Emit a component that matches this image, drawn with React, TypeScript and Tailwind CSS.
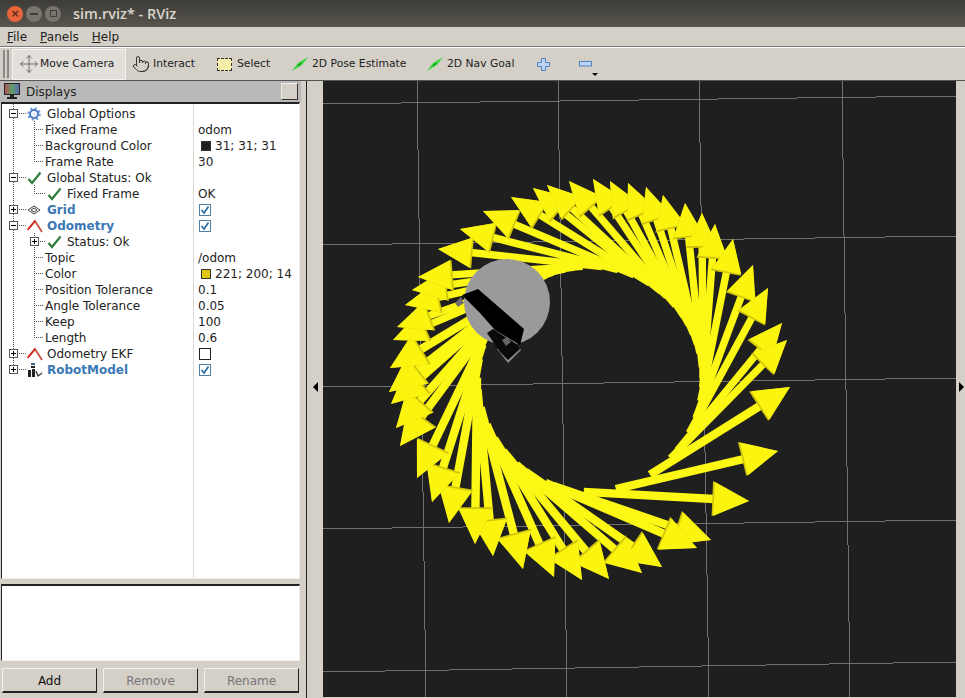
import { Move, Pointer } from "lucide-react";
import type { ReactNode } from "react";

const font = { fontFamily: '"DejaVu Sans", sans-serif' };

// arrow tips, read off the screenshot, in path order
const tips: [number, number][] = [
  [790, 387], [778, 451], [749, 501], [711, 540], [697, 548], [662, 567], [642, 573], [609, 579], [582, 580],
  [554, 577], [523, 569], [493, 556], [475, 544], [449, 523], [432, 502], [417, 478], [400, 446], [396, 428],
  [391, 404], [389, 392], [390, 368], [393, 340], [397, 327], [405, 305], [412, 290], [418, 277], [438, 249],
  [460, 229], [483, 211], [511, 197], [533, 188], [547, 185], [569, 181], [593, 179], [610, 181], [628, 183],
  [646, 187], [663, 195], [685, 203], [702, 213], [715, 224], [733, 239], [753, 265], [768, 288], [782, 323], [787, 340],
];

const pts = (list: number[][]) => list.map((p) => p.join(",")).join(" ");

function arrowGeometry(tip: [number, number]) {
  const cx = 590;
  const cy = 379;
  const r = 113;
  const dx = tip[0] - cx;
  const dy = tip[1] - cy;
  const a = Math.atan2(dy, dx) + Math.acos(r / Math.hypot(dx, dy));
  const sx = cx + r * Math.cos(a);
  const sy = cy + r * Math.sin(a);
  const len = Math.hypot(tip[0] - sx, tip[1] - sy);
  const ux = (tip[0] - sx) / len;
  const uy = (tip[1] - sy) / len;
  const nx = -uy;
  const ny = ux;
  // the far side of the circle is foreshortened by the camera
  const far = tip[1] < 350;
  const tw = far ? 3.7 : 4.2;
  const hw = far ? 15 : 17;
  const hl = far ? 33 : 35;
  const bx = tip[0] - ux * hl;
  const by = tip[1] - uy * hl;
  return {
    tail: [
      [sx + nx * tw, sy + ny * tw],
      [bx + nx * tw, by + ny * tw],
      [bx - nx * tw, by - ny * tw],
      [sx - nx * tw, sy - ny * tw],
    ],
    head: [tip, [bx + nx * hw, by + ny * hw], [bx - nx * hw, by - ny * hw]],
    shade: [tip, [bx + nx * hw - ux * 1.5, by + ny * hw - uy * 1.5], [bx - nx * (hw + 1) - ux * 2, by - ny * (hw + 1) - uy * 2]],
  };
}

function GridLine({ d }: { d: number[] }) {
  return <line x1={d[0]} y1={d[1]} x2={d[2]} y2={d[3]} stroke="#707070" strokeWidth="1" shapeRendering="crispEdges" />;
}

function Scene() {
  const arrows = tips.map(arrowGeometry);
  return (
    <svg viewBox="323 81 633 616" className="block w-full h-full">
      <rect x="323" y="81" width="633" height="616" fill="#1f1f1f" />
      <GridLine d={[417, 81, 426, 697]} />
      <GridLine d={[558, 81, 567, 697]} />
      <GridLine d={[699, 81, 709, 697]} />
      <GridLine d={[842, 81, 850, 697]} />
      <GridLine d={[323, 104, 956, 96]} />
      <GridLine d={[323, 245, 956, 236]} />
      <GridLine d={[323, 387, 956, 378]} />
      <GridLine d={[323, 529, 956, 520]} />
      <GridLine d={[323, 672, 956, 662]} />
      {arrows.map((g, i) => (
        <polygon key={i} points={pts(g.tail)} fill="#fcf714" />
      ))}
      {arrows.map((g, i) => (
        <g key={i}>
          <polygon points={pts(g.shade)} fill="#d2c60c" />
          <polygon points={pts(g.head)} fill="#fbf40f" />
        </g>
      ))}
      <circle cx="507" cy="302" r="43" fill="#9a9a9a" />
      <polygon points="455,303 461,297 464,303 458,307" fill="#707070" />
      <polygon points="462,295 478,289 524,329 520,345 495,330 480,313" fill="#000" />
      <polygon points="497,349 508,363 521,350 517,344" fill="#8a8a8a" />
      <polygon points="487,333 493,329 518,345 520,349 508,360 500,352" fill="#0a0a0a" />
      <polygon points="502,340 507,337 511,342 506,346" fill="#666" />
    </svg>
  );
}

function ExpandBox({ open }: { open: boolean }) {
  return (
    <svg width="9" height="9" viewBox="0 0 9 9" className="block">
      <rect x="0.5" y="0.5" width="8" height="8" fill="#fff" stroke="#555" />
      <line x1="2" y1="4.5" x2="7" y2="4.5" stroke="#000" />
      {!open && <line x1="4.5" y1="2" x2="4.5" y2="7" stroke="#000" />}
    </svg>
  );
}

function CheckMark() {
  return (
    <svg width="15" height="14" viewBox="0 0 15 14" className="block">
      <polyline points="1.5,8 5,12 13.5,1.5" fill="none" stroke="#2f7d3b" strokeWidth="2.2" />
    </svg>
  );
}

function Gear() {
  return (
    <svg width="14" height="14" viewBox="0 0 14 14" className="block">
      <circle cx="7" cy="7" r="5.6" fill="none" stroke="#6f9bd8" strokeWidth="2.4" strokeDasharray="2 2.4" />
      <circle cx="7" cy="7" r="4" fill="none" stroke="#4c7cc4" strokeWidth="2" />
      <circle cx="7" cy="7" r="1.8" fill="#dfe9f7" />
    </svg>
  );
}

function GridIcon() {
  return (
    <svg width="14" height="10" viewBox="0 0 14 10" className="block">
      <path d="M1 5 L7 1 L13 5 L7 9 Z M4 5 L7 3 L10 5 L7 7 Z" fill="none" stroke="#444" />
    </svg>
  );
}

function OdomIcon() {
  return (
    <svg width="16" height="14" viewBox="0 0 16 14" className="block">
      <polyline points="0.5,11 8,2 15,13" fill="none" stroke="#c8503f" strokeWidth="1.8" />
      <polyline points="1,10.5 8,2" fill="none" stroke="#d22a1c" strokeWidth="1.8" />
    </svg>
  );
}

function RobotIcon() {
  return (
    <svg width="16" height="15" viewBox="0 0 16 15" className="block">
      <rect x="4" y="0" width="4" height="2" fill="#3f5f8f" />
      <rect x="4" y="3" width="4" height="2" fill="#222" />
      <path d="M1 14 V7 H4 V14 Z M5 14 V6 H8 V14 Z" fill="#222" />
      <path d="M9 8 L11 13 L15 10" fill="none" stroke="#333" strokeWidth="1.3" />
    </svg>
  );
}

function Swatch({ color }: { color: string }) {
  return <span className="w-[10px] h-[10px] mr-[4px] border border-[#333]" style={{ background: color }} />;
}

function CheckBox({ on }: { on: boolean }) {
  return (
    <span className={on ? "ml-[1px] w-[12px] h-[12px] border border-[#4f7f9f] flex items-center justify-center" : "ml-[1px] w-[12px] h-[12px] border border-[#222] bg-white"}>
      {on && (
        <svg width="10" height="10" viewBox="0 0 10 10" className="block">
          <polyline points="1.5,5 4,8 8.5,1.5" fill="none" stroke="#2f6f9f" strokeWidth="1.7" />
        </svg>
      )}
    </span>
  );
}

type RowProps = {
  indent: number;
  box?: "open" | "closed";
  boxX?: number;
  icon?: ReactNode;
  iconX?: number;
  label: string;
  bold?: boolean;
  value?: ReactNode;
};

function Row({ indent, box, boxX = 7, icon, iconX = 25, label, bold, value }: RowProps) {
  return (
    <div className="relative flex h-4 items-center">
      {box && (
        <span className="absolute top-[3px]" style={{ left: boxX }}>
          <ExpandBox open={box === "open"} />
        </span>
      )}
      {icon && (
        <span className="absolute top-0 h-4 flex items-center" style={{ left: iconX }}>
          {icon}
        </span>
      )}
      <span
        className={bold ? "w-[191px] shrink-0 font-bold text-[#3b78b5] whitespace-nowrap" : "w-[191px] shrink-0 text-[#222] whitespace-nowrap"}
        style={{ paddingLeft: indent }}
      >
        {label}
      </span>
      <span className="flex items-center pl-[5px] text-[#222] whitespace-nowrap">{value}</span>
    </div>
  );
}

function TreeGuides() {
  const hs = [
    [12, 113, 25], [33, 129, 43], [33, 145, 43], [33, 161, 43], [12, 177, 25], [33, 193, 45], [12, 209, 25],
    [12, 225, 25], [37, 241, 45], [33, 257, 43], [33, 273, 43], [33, 289, 43], [33, 305, 43], [33, 321, 43],
    [33, 337, 43], [12, 353, 25], [12, 369, 25],
  ];
  const vs = [[12, 104, 369], [33, 121, 161], [33, 185, 193], [33, 233, 337]];
  return (
    <svg className="absolute left-0 top-0 pointer-events-none" width="60" height="280" viewBox="1 104 60 280">
      <g stroke="#555" strokeDasharray="1 1" shapeRendering="crispEdges">
        {vs.map((v) => (
          <line key={v.join("-")} x1={v[0] + 0.5} y1={v[1]} x2={v[0] + 0.5} y2={v[2]} />
        ))}
        {hs.map((h) => (
          <line key={h.join("-")} x1={h[0]} y1={h[1] + 0.5} x2={h[2]} y2={h[1] + 0.5} />
        ))}
      </g>
    </svg>
  );
}

function GreenArrow() {
  return (
    <svg width="16" height="14" viewBox="0 0 16 14" className="block shrink-0">
      <polygon points="0,14 6,6 16,0 10,8" fill="#36d63f" />
      <line x1="6" y1="9" x2="9" y2="6" stroke="#0d5f1a" />
    </svg>
  );
}

function ToolButton({ className, icon, label }: { className: string; icon: ReactNode; label: string }) {
  return (
    <div className={`flex h-full shrink-0 items-center whitespace-nowrap text-[#222] ${className}`}>
      {icon}
      <span>{label}</span>
    </div>
  );
}

function PanelButton({ label, disabled }: { label: string; disabled?: boolean }) {
  return (
    <div
      className={
        disabled
          ? "w-[95px] h-[25px] pt-[1px] flex items-center justify-center text-[12px] text-[#777] border border-t-[#f2f0ec] border-l-[#f2f0ec] border-r-[#222] border-b-[#222] border-b-2"
          : "w-[95px] h-[25px] pt-[1px] flex items-center justify-center text-[12px] text-[#111] border border-t-[#f2f0ec] border-l-[#f2f0ec] border-r-[#222] border-b-[#222] border-b-2"
      }
    >
      {label}
    </div>
  );
}

export default function App() {
  return (
    <div className="w-[965px] h-[698px] overflow-hidden flex flex-col bg-[#d4d0c8] text-[12px] leading-4" style={font}>
      {/* title bar */}
      <div className="h-[27px] shrink-0 flex items-center bg-gradient-to-b from-[#3d3c38] to-[#58554e]">
        <div className="flex items-center pl-[7px] gap-[3px]">
          <span className="w-[16px] h-[16px] rounded-full bg-[#e8643a] flex items-center justify-center text-[11px] leading-none font-bold text-[#5a2a18]">×</span>
          <span className="w-[16px] h-[16px] rounded-full bg-[#77756d] flex items-center justify-center">
            <span className="w-[8px] h-[2px] bg-[#3f3e3a]" />
          </span>
          <span className="w-[16px] h-[16px] rounded-full bg-[#77756d] flex items-center justify-center">
            <span className="w-[7px] h-[7px] border border-[#3f3e3a]" />
          </span>
        </div>
        <span className="ml-[12px] text-[14.5px] font-semibold text-[#d9d5cb]" style={{ fontFamily: '"Open Sans", sans-serif' }}>
          sim.rviz* - RViz
        </span>
      </div>

      {/* menu */}
      <div className="h-[19px] shrink-0 flex items-center pl-[7px] gap-[13px] text-[#222] border-b border-b-[#777] box-content">
        <span><span className="underline">F</span>ile</span>
        <span><span className="underline">P</span>anels</span>
        <span><span className="underline">H</span>elp</span>
      </div>

      {/* toolbar */}
      <div className="h-[34px] shrink-0 flex items-center text-[10.75px] border-t border-t-white border-b border-b-[#555]">
        <div className="flex h-[28px] ml-[3px] mr-[3px] w-[6px] justify-between">
          <span className="w-[2px] border border-[#888] bg-[#eee]" />
          <span className="w-[2px] border border-[#888] bg-[#eee]" />
        </div>
        <div className="w-[114px] h-[31px] shrink-0 flex items-center pl-[6px] gap-[1px] bg-[#e3e0db] border border-[#f4f3f0] text-[#222] whitespace-nowrap">
          <Move size={20} strokeWidth={1} color="#555" />
          <span>Move Camera</span>
        </div>
        <ToolButton className="w-[90px] pl-[6px] gap-[3px]" icon={<Pointer size={18} strokeWidth={1.2} color="#222" />} label="Interact" />
        <ToolButton
          className="w-[75px] pl-[1px] gap-[5px]"
          icon={<span className="w-[15px] h-[13px] bg-[#f6efa9] border border-dashed border-[#333]" />}
          label="Select"
        />
        <ToolButton className="w-[135px] pl-[1px] gap-[4px]" icon={<GreenArrow />} label="2D Pose Estimate" />
        <ToolButton className="w-[111px] pl-[1px] gap-[4px]" icon={<GreenArrow />} label="2D Nav Goal" />
        <svg width="13" height="13" viewBox="0 0 13 13" className="block shrink-0">
          <path d="M4.5 .5 H8.5 V4.5 H12.5 V8.5 H8.5 V12.5 H4.5 V8.5 H.5 V4.5 H4.5 Z" fill="#bcd3f2" stroke="#4f83c4" />
        </svg>
        <svg width="13" height="6" viewBox="0 0 13 6" className="block shrink-0 ml-[29px]">
          <rect x=".5" y=".5" width="12" height="4.5" fill="#bcd3f2" stroke="#4f83c4" />
        </svg>
        <span className="mt-[20px] w-0 h-0 border-l-[3px] border-r-[3px] border-t-[3px] border-l-transparent border-r-transparent border-t-black" />
      </div>

      {/* body */}
      <div className="flex-1 min-h-0 flex">
        {/* left dock */}
        <div className="w-[301px] shrink-0 flex flex-col">
          <div className="h-[21px] shrink-0 flex items-center bg-[#b9bab7] pl-[4px] pr-[3px]">
            <svg width="16" height="17" viewBox="0 0 16 17" className="block">
              <defs>
                <linearGradient id="screenColors" x1="0" x2="1" y1="0" y2="0">
                  <stop offset="0" stopColor="#b8505a" />
                  <stop offset="0.5" stopColor="#5f9f6a" />
                  <stop offset="1" stopColor="#5a6ab8" />
                </linearGradient>
              </defs>
              <rect x=".5" y=".5" width="15" height="11" fill="url(#screenColors)" stroke="#222" />
              <rect x="6" y="12" width="4" height="2" fill="#222" />
              <rect x="3" y="14" width="10" height="2" fill="#222" />
            </svg>
            <span className="ml-[6px] text-[#222]">Displays</span>
            <span className="ml-auto w-[17px] h-[17px] bg-[#d4d0c8] border border-t-[#f2f0ec] border-l-[#f2f0ec] border-r-[#333] border-b-[#333]" />
          </div>

          {/* property tree */}
          <div className="relative h-[477px] shrink-0 mx-[1px] bg-white border-t-2 border-l border-t-[#222] border-l-[#222] border-r border-b border-r-[#efedea] border-b-[#efedea]">
            <div className="absolute left-[191px] top-0 bottom-0 w-px bg-[#dcdad6]" />
            <TreeGuides />
            <div className="relative pt-[2px]">
              <Row indent={45} box="open" icon={<Gear />} label="Global Options" />
              <Row indent={43} label="Fixed Frame" value="odom" />
              <Row indent={43} label="Background Color" value={<><span className="w-[3px]" /><Swatch color="#1f1f1f" />31; 31; 31</>} />
              <Row indent={43} label="Frame Rate" value="30" />
              <Row indent={45} box="open" icon={<CheckMark />} label="Global Status: Ok" />
              <Row indent={65} icon={<CheckMark />} iconX={45} label="Fixed Frame" value="OK" />
              <Row indent={45} box="closed" icon={<GridIcon />} label="Grid" bold value={<CheckBox on />} />
              <Row indent={45} box="open" icon={<OdomIcon />} label="Odometry" bold value={<CheckBox on />} />
              <Row indent={65} box="closed" boxX={28} icon={<CheckMark />} iconX={45} label="Status: Ok" />
              <Row indent={43} label="Topic" value="/odom" />
              <Row indent={43} label="Color" value={<><span className="w-[3px]" /><Swatch color="#ddc80e" />221; 200; 14</>} />
              <Row indent={43} label="Position Tolerance" value="0.1" />
              <Row indent={43} label="Angle Tolerance" value="0.05" />
              <Row indent={43} label="Keep" value="100" />
              <Row indent={43} label="Length" value="0.6" />
              <Row indent={45} box="closed" icon={<OdomIcon />} label="Odometry EKF" value={<CheckBox on={false} />} />
              <Row indent={45} box="closed" icon={<RobotIcon />} label="RobotModel" bold value={<CheckBox on />} />
            </div>
          </div>

          <div className="h-[5px] shrink-0" />
          <div className="h-[77px] shrink-0 mx-[1px] bg-white border-t-2 border-l border-t-[#222] border-l-[#222] border-r border-b border-r-[#efedea] border-b-[#efedea]" />
          <div className="flex-1 flex items-start gap-[6px] pl-[2px] pt-[7px]">
            <PanelButton label="Add" />
            <PanelButton label="Remove" disabled />
            <PanelButton label="Rename" disabled />
          </div>
        </div>

        {/* splitter */}
        <div className="w-[22px] shrink-0 flex items-center">
          <div className="ml-[5px] w-px h-full bg-[#222]" />
          <span className="ml-[6px] mb-[5px] w-0 h-0 border-t-[5px] border-b-[5px] border-r-[5px] border-t-transparent border-b-transparent border-r-black" />
        </div>

        {/* 3d view */}
        <div className="w-[633px] shrink-0 h-[616px]">
          <Scene />
        </div>

        <div className="flex-1 flex items-center">
          <span className="ml-[3px] mb-[5px] w-0 h-0 border-t-[5px] border-b-[5px] border-l-[5px] border-t-transparent border-b-transparent border-l-black" />
        </div>
      </div>
    </div>
  );
}
